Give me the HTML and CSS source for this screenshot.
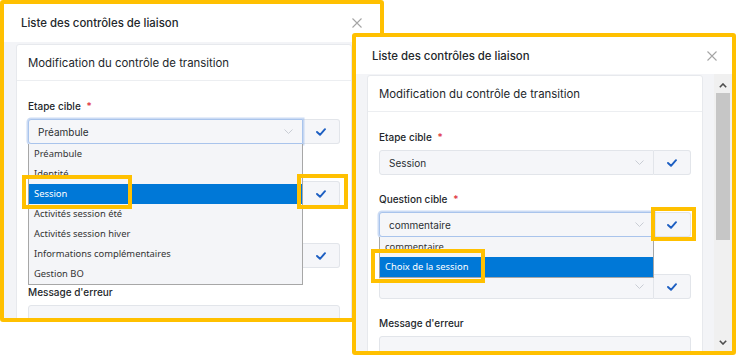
FILE: index.html
```html
<!DOCTYPE html>
<html lang="fr">
<head>
<meta charset="utf-8">
<title>Liste des contrôles de liaison</title>
<link rel="stylesheet" href="styles.css">
</head>
<body>
<div class="stage">

  <!-- Window A (behind) -->
  <section class="window win-a">
    <header class="dlg-head">
      <h1 class="dlg-title">Liste des contrôles de liaison</h1>
      <svg class="close" width="10" height="10" viewBox="0 0 10 10"><path d="M0.5 0.5 L9.5 9.5 M9.5 0.5 L0.5 9.5"/></svg>
    </header>
    <div class="dlg-body">
      <div class="card">
        <div class="card-head">Modification du contrôle de transition</div>
        <div class="card-body">
          <div class="form-group">
            <div class="label">Etape cible <span class="req">*</span></div>
            <div class="input-group">
              <div class="select focus">
                <span class="value">Préambule</span>
                <svg class="chev" width="9" height="5" viewBox="0 0 9 5"><path d="M0.5 0.5 L4.5 4.5 L8.5 0.5"/></svg>
                <ul class="dropdown">
                  <li>Préambule</li>
                  <li>Identité</li>
                  <li class="hl">Session</li>
                  <li>Activités session été</li>
                  <li>Activités session hiver</li>
                  <li>Informations complémentaires</li>
                  <li>Gestion BO</li>
                </ul>
              </div>
              <div class="btn"><svg class="check" width="10" height="8" viewBox="0 0 10 8"><path d="M1 4 L4 6.8 L9 1.2"/></svg></div>
            </div>
          </div>
          <div class="form-group">
            <div class="label"></div>
            <div class="input-group">
              <div class="select"><span class="value"></span><svg class="chev" width="9" height="5" viewBox="0 0 9 5"><path d="M0.5 0.5 L4.5 4.5 L8.5 0.5"/></svg></div>
              <div class="btn"><svg class="check" width="10" height="8" viewBox="0 0 10 8"><path d="M1 4 L4 6.8 L9 1.2"/></svg></div>
            </div>
          </div>
          <div class="form-group">
            <div class="label"></div>
            <div class="input-group">
              <div class="select"><span class="value"></span><svg class="chev" width="9" height="5" viewBox="0 0 9 5"><path d="M0.5 0.5 L4.5 4.5 L8.5 0.5"/></svg></div>
              <div class="btn"><svg class="check" width="10" height="8" viewBox="0 0 10 8"><path d="M1 4 L4 6.8 L9 1.2"/></svg></div>
            </div>
          </div>
          <div class="form-group">
            <div class="label">Message d'erreur</div>
            <div class="textarea"></div>
          </div>
        </div>
      </div>
    </div>
    <div class="mark mark-a1"></div>
    <div class="mark mark-a2"></div>
  </section>

  <!-- Window B (front) -->
  <section class="window win-b">
    <header class="dlg-head">
      <h1 class="dlg-title">Liste des contrôles de liaison</h1>
      <svg class="close" width="10" height="10" viewBox="0 0 10 10"><path d="M0.5 0.5 L9.5 9.5 M9.5 0.5 L0.5 9.5"/></svg>
    </header>
    <div class="dlg-body">
      <div class="card">
        <div class="card-head">Modification du contrôle de transition</div>
        <div class="card-body">
          <div class="form-group">
            <div class="label">Etape cible <span class="req">*</span></div>
            <div class="input-group">
              <div class="select"><span class="value">Session</span><svg class="chev" width="9" height="5" viewBox="0 0 9 5"><path d="M0.5 0.5 L4.5 4.5 L8.5 0.5"/></svg></div>
              <div class="btn"><svg class="check" width="10" height="8" viewBox="0 0 10 8"><path d="M1 4 L4 6.8 L9 1.2"/></svg></div>
            </div>
          </div>
          <div class="form-group">
            <div class="label">Question cible <span class="req">*</span></div>
            <div class="input-group">
              <div class="select focus">
                <span class="value">commentaire</span>
                <svg class="chev" width="9" height="5" viewBox="0 0 9 5"><path d="M0.5 0.5 L4.5 4.5 L8.5 0.5"/></svg>
                <ul class="dropdown">
                  <li>commentaire</li>
                  <li class="hl">Choix de la session</li>
                </ul>
              </div>
              <div class="btn"><svg class="check" width="10" height="8" viewBox="0 0 10 8"><path d="M1 4 L4 6.8 L9 1.2"/></svg></div>
            </div>
          </div>
          <div class="form-group">
            <div class="label"></div>
            <div class="input-group">
              <div class="select"><span class="value"></span><svg class="chev" width="9" height="5" viewBox="0 0 9 5"><path d="M0.5 0.5 L4.5 4.5 L8.5 0.5"/></svg></div>
              <div class="btn"><svg class="check" width="10" height="8" viewBox="0 0 10 8"><path d="M1 4 L4 6.8 L9 1.2"/></svg></div>
            </div>
          </div>
          <div class="form-group">
            <div class="label">Message d'erreur</div>
            <div class="textarea"></div>
          </div>
        </div>
      </div>
      <div class="scrollbar">
        <div class="sb-arrow sb-up"><svg width="8" height="5" viewBox="0 0 8 5"><path d="M0.8 4.2 L4 1 L7.2 4.2"/></svg></div>
        <div class="sb-thumb"></div>
        <div class="sb-space"></div>
        <div class="sb-arrow sb-down"><svg width="8" height="5" viewBox="0 0 8 5"><path d="M0.8 0.8 L4 4 L7.2 0.8"/></svg></div>
      </div>
    </div>
    <div class="mark mark-b1"></div>
    <div class="mark mark-b2"></div>
  </section>

</div>
</body>
</html>
```

FILE: styles.css
```css
* { box-sizing: border-box; }
html, body { margin: 0; padding: 0; }
body {
  width: 736px;
  height: 355px;
  overflow: hidden;
  background: #ffffff;
  font-family: Inter, "Noto Sans", sans-serif;
  color: #212529;
}
.stage {
  position: relative;
  width: 736px;
  height: 355px;
}

/* windows on a canvas */
.window {
  position: absolute;
  display: flex;
  flex-direction: column;
  border: 4px solid #ffc000;
  border-radius: 3px;
  background: #f3f4f7;
  overflow: hidden;
}
.win-a { left: 0; top: 0; width: 384px; height: 322px; }
.win-b { left: 352px; top: 33px; width: 384px; height: 322px; }

.dlg-head {
  flex: 0 0 38px;
  display: flex;
  align-items: center;
  justify-content: space-between;
  padding: 0 18px 0 17px;
  background: #ffffff;
}
.win-b .dlg-head { flex-basis: 37px; padding: 0 15px 0 16px; }
.dlg-title {
  margin: 0;
  font-size: 11.4px;
  font-weight: 500;
  color: #23272b;
}
.close path { stroke: #a5a5a5; stroke-width: 1.1; fill: none; }

.dlg-body {
  flex: 1;
  display: flex;
  align-items: flex-start;
  padding: 2px 0 0 12px;
  min-height: 0;
}
.win-b .dlg-body { padding: 1px 0 0 11px; gap: 11px; }

.card {
  flex: 0 0 336px;
  background: #ffffff;
  border: 1px solid #e7e9ed;
  border-radius: 3px;
}
.card-head {
  height: 36px;
  display: flex;
  align-items: center;
  padding: 0 11px;
  border-bottom: 1px solid #eceef1;
  font-size: 11.4px;
  color: #23272b;
}
.card-body { padding: 17px 11px 0; }

.form-group { margin-bottom: 16px; }
.label {
  height: 16px;
  line-height: 16px;
  margin-bottom: 5px;
  font-size: 10px;
  font-weight: 500;
  color: #23272b;
}
.req { color: #e0323c; margin-left: 3px; }

.input-group { display: flex; height: 25px; }
.select {
  position: relative;
  flex: 1;
  display: flex;
  align-items: center;
  justify-content: space-between;
  padding: 0 9px 0 9px;
  background: #f5f6f9;
  border: 1px solid #e2e5ea;
  border-radius: 3px 0 0 3px;
  font-size: 10px;
  color: #2b2f33;
}
.select.focus {
  border-color: #a9c4ec;
  box-shadow: 0 0 0 1.5px rgba(140, 175, 230, 0.45);
}
.chev path { stroke: #c9cdd4; stroke-width: 1; fill: none; }
.btn {
  flex: 0 0 37px;
  display: flex;
  align-items: center;
  justify-content: center;
  background: #f5f6f9;
  border: 1px solid #e2e5ea;
  border-left: none;
  border-radius: 0 3px 3px 0;
}
.check path { stroke: #1d5fc2; stroke-width: 1.9; fill: none; stroke-linecap: round; stroke-linejoin: round; }

.textarea {
  height: 60px;
  background: #f5f6f9;
  border: 1px solid #e2e5ea;
  border-radius: 3px;
}

/* native-like dropdown overlay */
.dropdown {
  position: absolute;
  left: -1px;
  right: -1px;
  top: 24px;
  margin: 0;
  padding: 0;
  list-style: none;
  background: #f4f5f8;
  border: 1px solid #a7a7a7;
  border-top: none;
  z-index: 5;
  font-family: "Noto Sans", "Open Sans", sans-serif;
  font-size: 9.4px;
  color: #333;
}
.dropdown li {
  height: 20px;
  line-height: 20px;
  padding-left: 5px;
  white-space: nowrap;
}
.dropdown li.hl { background: #0078d7; color: #ffffff; }

/* scrollbar */
.scrollbar {
  align-self: stretch;
  flex: 0 0 18px;
  margin-top: -1px;
  display: flex;
  flex-direction: column;
  background: #f0f0f0;
}
.sb-arrow {
  display: flex;
  align-items: center;
  justify-content: center;
}
.sb-up { flex: 0 0 19px; padding-top: 3px; }
.sb-down { flex: 0 0 17px; }
.sb-arrow path { stroke: #4d4d4d; stroke-width: 1.6; fill: none; }
.sb-thumb {
  flex: 0 0 147px;
  margin: 0 2px;
  background: #c6c6c6;
}
.sb-space { flex: 1; }

/* annotation boxes */
.mark {
  position: absolute;
  border: 4px solid #ffc000;
  z-index: 10;
}
.mark-a1 { left: 18px; top: 171px; width: 110px; height: 34px; }
.mark-a2 { left: 293px; top: 170px; width: 51px; height: 35px; }
.mark-b1 { left: 295px; top: 170px; width: 45px; height: 34px; }
.mark-b2 { left: 15px; top: 212px; width: 114px; height: 34px; }
```
